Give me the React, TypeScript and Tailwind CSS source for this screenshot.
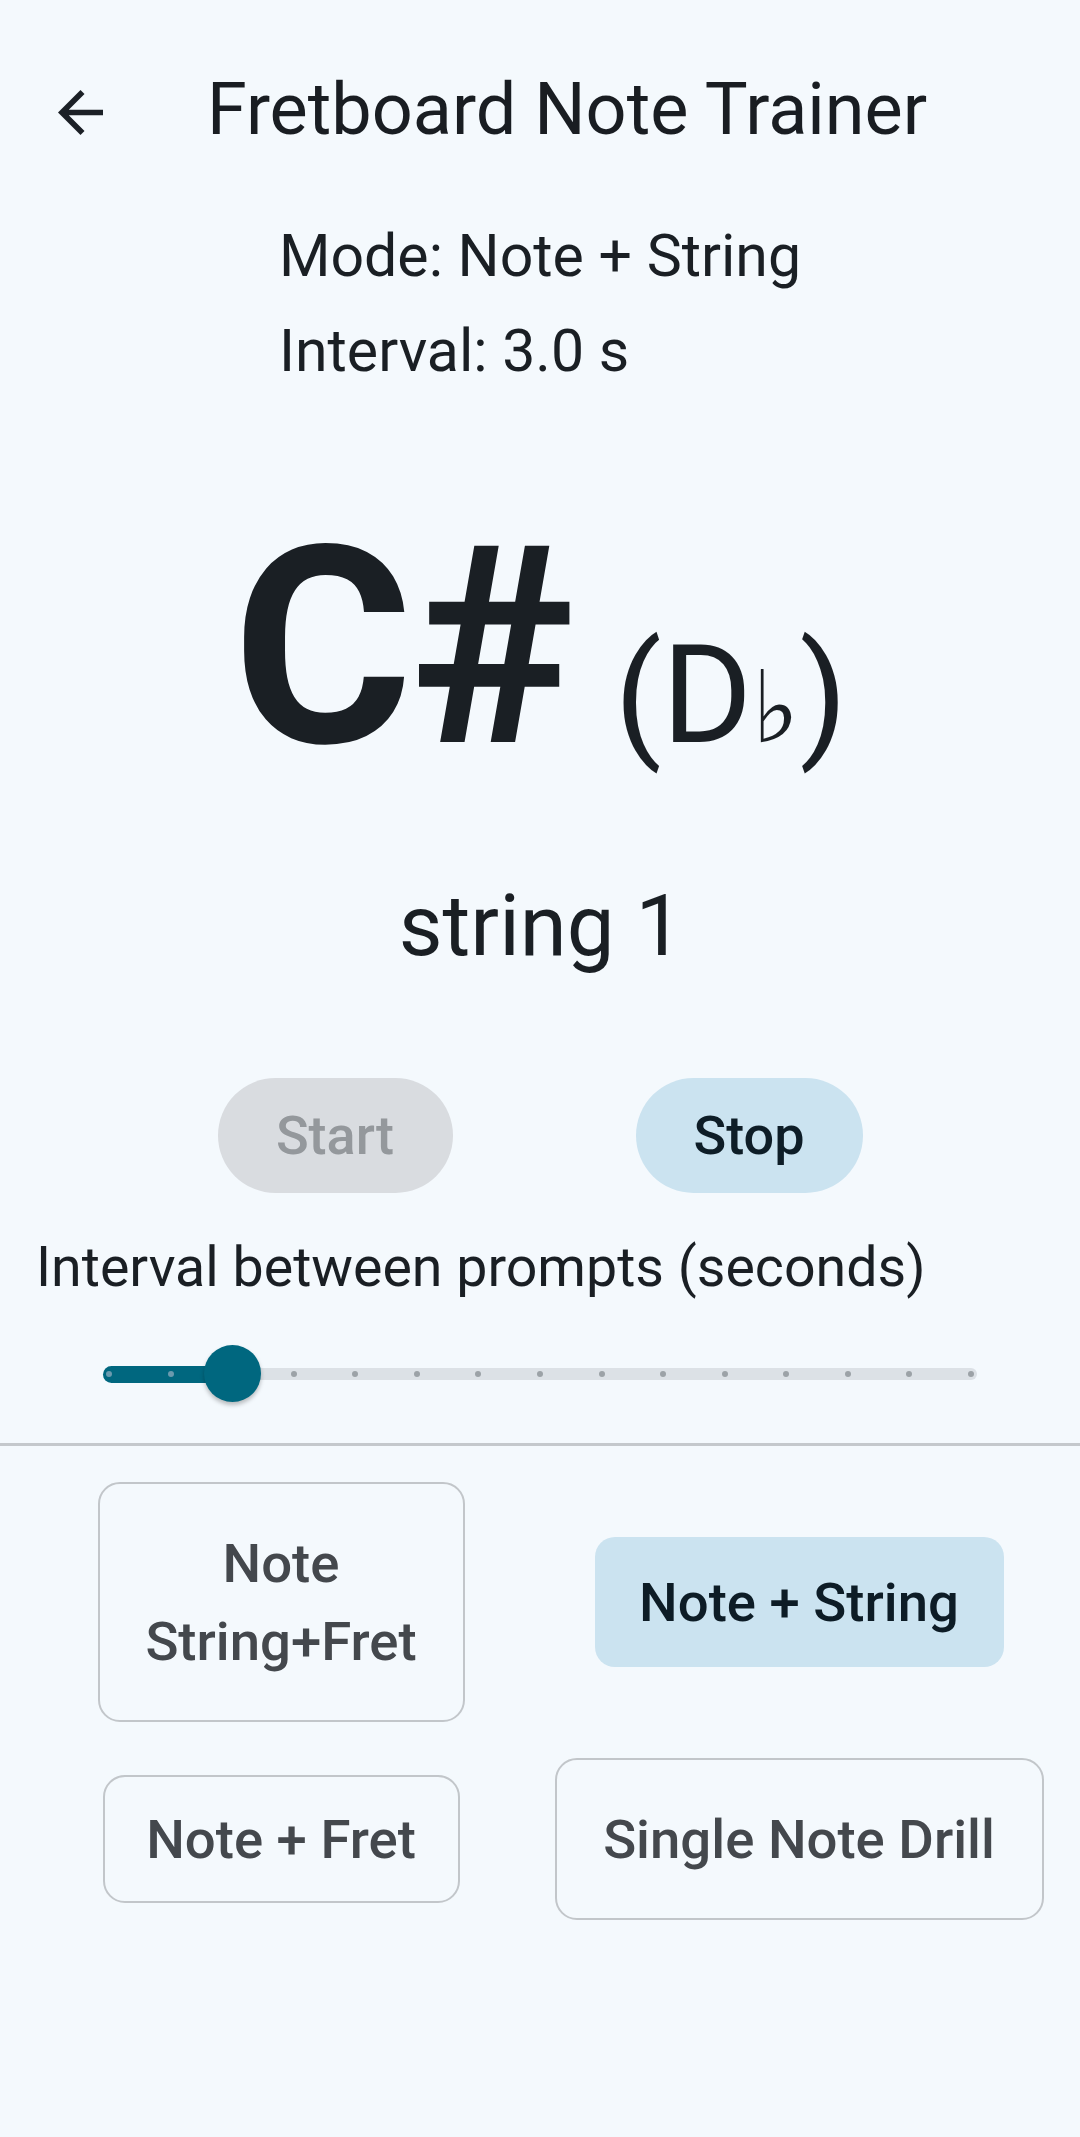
import { useState } from "react";

const MODES = [
  { id: "full", label: ["Note", "String+Fret"], box: "w-[367px] h-[240px]" },
  { id: "string", label: ["Note + String"], box: "w-[409px] h-[130px]" },
  { id: "fret", label: ["Note + Fret"], box: "w-[357px] h-[128px]" },
  { id: "single", label: ["Single Note Drill"], box: "w-[489px] h-[162px]" },
];

const STEPS = 15;
const STEP_PX = 61.57;

function BackArrow() {
  return (
    <svg width="45" height="45" viewBox="160 160 640 640" className="mt-[5px] shrink-0">
      <path d="M313-440l224 224-57 56-320-320 320-320 57 56-224 224h487v80H313Z" transform="translate(0 960)" fill="#1b2026" />
    </svg>
  );
}

function Slider({ value }: { value: number }) {
  // value is step index 0..14, track drawn 103..975 in page coords
  const thumbX = 6 + value * STEP_PX;
  return (
    <div className="relative mx-[103px] h-[60px] flex items-center">
      <div className="h-[17px] bg-[#00677f] rounded-l-full" style={{ width: thumbX }} />
      <div className="h-[12px] flex-1 bg-[#dce1e6] rounded-r-full" />
      {Array.from({ length: STEPS }).map((_, i) => (
        <div
          key={i}
          className={`absolute top-[27px] w-[6px] h-[6px] rounded-full ${i <= value ? "bg-[#6a9aae]" : "bg-[#9ca2a7]"}`}
          style={{ left: 3 + i * STEP_PX }}
        />
      ))}
      <div
        className="absolute top-[1px] w-[57px] h-[57px] -ml-[28px] rounded-full bg-[#00677f] shadow-[0_3px_4px_rgba(0,0,0,0.25)]"
        style={{ left: thumbX }}
      />
    </div>
  );
}

export default function App() {
  const [mode, setMode] = useState("string");
  const [running, setRunning] = useState(true);

  return (
    <div className="min-h-[2137px] w-[1080px] bg-[#f4f9fd] text-[#1a1f24] font-[Roboto,'DejaVu_Sans',sans-serif] flex flex-col overflow-hidden">
      <div className="mt-[68px] h-[84px] flex items-center pl-[58px]">
        <BackArrow />
        <h1 className="ml-[104px] text-[72px] leading-[84px] font-normal text-[#191d22]">Fretboard Note Trainer</h1>
      </div>

      <div className="self-center flex flex-col items-start">
        <div className="mt-[69px] text-[59px] leading-[69px]">Mode: Note + String</div>
        <div className="mt-[26px] text-[59px] leading-[69px]">Interval: 3.0 s</div>
      </div>

      <div className="mt-[125px] flex items-baseline justify-center">
        <span className="text-[276px] leading-none font-bold tracking-[-2px]">C#</span>
        <span className="ml-[42px] text-[138px] leading-none font-normal">
          (D<span className="text-[100px] font-['DejaVu_Sans',sans-serif] font-extralight">♭</span>)
        </span>
      </div>

      <div className="mt-[91px] text-center text-[85px] leading-[98px] pl-[2px]">string 1</div>

      <div className="mt-[103px] flex justify-center gap-[183px]">
        <button
          onClick={() => setRunning(true)}
          disabled={running}
          className="w-[235px] h-[115px] rounded-full bg-[#d9dce0] text-[54px] font-medium text-[#94989c]"
        >
          Start
        </button>
        <button
          onClick={() => setRunning(false)}
          className="w-[227px] h-[115px] rounded-full bg-[#cbe3f0] text-[54px] font-medium text-[#0e1d27]"
        >
          Stop
        </button>
      </div>

      <div className="mt-[43px] pl-[36px] text-[55.5px] leading-[64px]">Interval between prompts (seconds)</div>

      <div className="mt-[44px]">
        <Slider value={2} />
      </div>

      <div className="mt-[39px] h-[3px] bg-[#c4c8cc]" />

      <div className="mt-[36px] px-[22px] grid grid-cols-2 gap-y-[36px] items-center justify-items-center">
        {MODES.map((m) => {
          const active = m.id === mode;
          return (
            <button
              key={m.id}
              onClick={() => setMode(m.id)}
              className={`${m.box} flex flex-col items-center justify-center text-[54.5px] leading-[78px] font-medium ${
                active
                  ? "rounded-[20px] bg-[#cbe3f0] text-[#0d1c26]"
                  : "rounded-[22px] border-2 border-[#c2c6ca] text-[#44484d]"
              }`}
            >
              {m.label.map((l) => (
                <span key={l}>{l}</span>
              ))}
            </button>
          );
        })}
      </div>
    </div>
  );
}
